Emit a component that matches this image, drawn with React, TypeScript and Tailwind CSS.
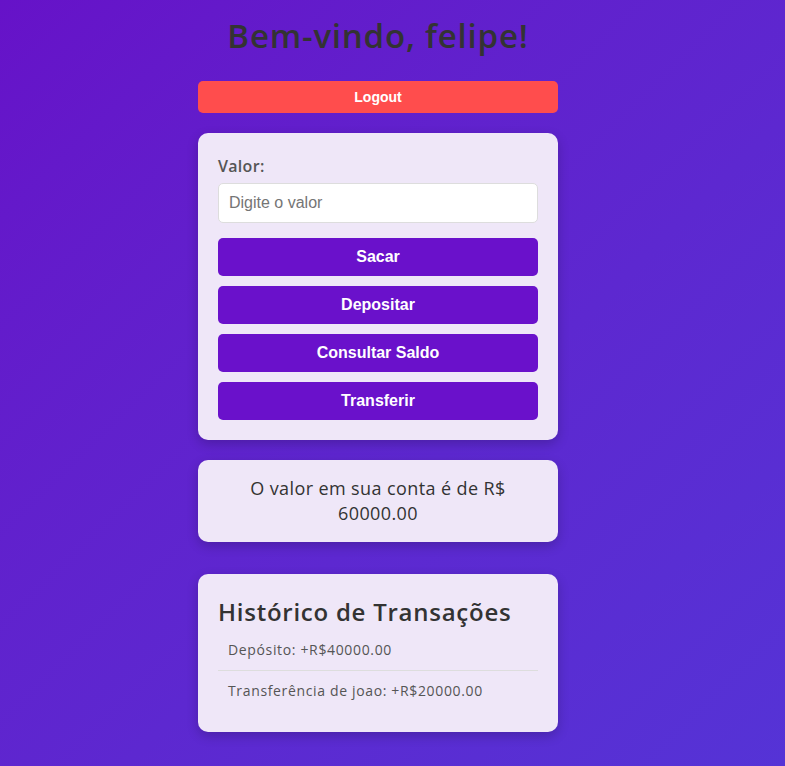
import React from 'react';

const historico = [
  'Depósito: +R$40000.00',
  'Transferência de joao: +R$20000.00',
];

const acoes = ['Sacar', 'Depositar', 'Consultar Saldo', 'Transferir'];

const App: React.FC = () => {
  return (
    <div className="min-h-screen w-full bg-linear-to-br from-[#6612c8] to-[#5533d6] font-['Open_Sans',sans-serif]">
      <div className="w-[756px] flex flex-col items-center pt-[12px] pb-[34px]">
        <div className="w-[360px] flex flex-col">
          <h1 className="text-center text-[33px] tracking-[0.8px] leading-[48px] font-semibold text-[#333]">Bem-vindo, felipe!</h1>

          <button className="mt-[21px] h-[32px] rounded-[5px] bg-[#ff4d4d] text-white text-[14px] font-bold font-['Liberation_Sans',Arial,sans-serif]">
            Logout
          </button>

          {/* Operações */}
          <div className="mt-[20px] bg-[#efe7f8] rounded-[10px] p-[20px] shadow-[0_4px_12px_rgba(0,0,0,0.2)]">
            <label className="block text-[16px] tracking-[0.3px] font-semibold text-[#555] leading-[24px] mt-[1px]">Valor:</label>
            <input
              type="text"
              placeholder="Digite o valor"
              className="mt-[5px] w-full h-[40px] px-[10px] bg-white border border-[#ddd] rounded-[5px] text-[16px] placeholder:text-[#757575] font-['Liberation_Sans',Arial,sans-serif] outline-none"
            />
            <div className="mt-[15px] flex flex-col gap-[10px]">
              {acoes.map((a) => (
                <button
                  key={a}
                  className="h-[38px] rounded-[5px] bg-[#6a11cb] text-white text-[16px] font-bold font-['Liberation_Sans',Arial,sans-serif]"
                >
                  {a}
                </button>
              ))}
            </div>
          </div>

          {/* Saldo */}
          <div className="mt-[20px] bg-[#efe7f8] rounded-[10px] px-[40px] pt-[16px] pb-[16px] shadow-[0_4px_12px_rgba(0,0,0,0.2)] text-center text-[18px] tracking-[0.4px] leading-[25px] text-[#333]">
            O valor em sua conta é de R$ 60000.00
          </div>

          {/* Histórico */}
          <div className="mt-[32px] bg-[#efe7f8] rounded-[10px] px-[20px] pt-[20px] pb-[21px] shadow-[0_4px_12px_rgba(0,0,0,0.2)]">
            <h2 className="text-[24px] tracking-[0.75px] leading-[36px] font-semibold text-[#333]">Histórico de Transações</h2>
            <ul>
              {historico.map((h, i) => (
                <li
                  key={i}
                  className={`px-[10px] py-[8px] text-[14px] tracking-[0.65px] leading-[24px] text-[#555] ${i < historico.length - 1 ? 'border-b border-[#ddd]' : ''}`}
                >
                  {h}
                </li>
              ))}
            </ul>
          </div>
        </div>
      </div>
    </div>
  );
};

export default App;
